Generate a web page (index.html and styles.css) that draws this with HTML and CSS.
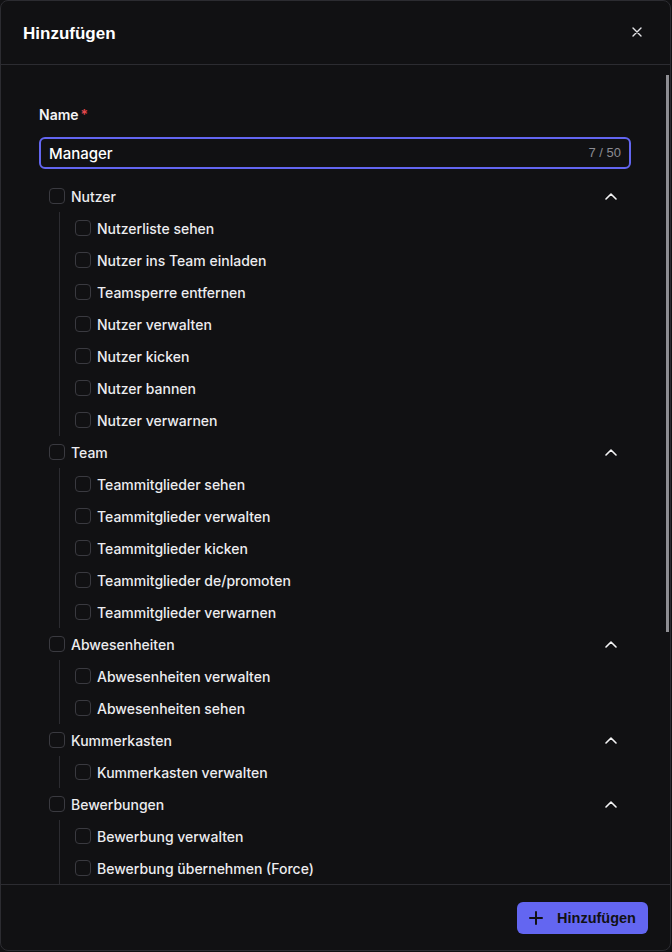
FILE: index.html
```html
<!DOCTYPE html>
<html lang="de">
<head>
  <meta charset="UTF-8" />
  <meta name="viewport" content="width=device-width, initial-scale=1.0"/>
  <title>Hinzufügen</title>
  <link rel="stylesheet" href="styles.css">
</head>
<body>
  <div class="modal">
    <header class="modal-header">
      <h2>Hinzufügen</h2>
      <button class="close" aria-label="Schließen">
        <svg width="10" height="10" viewBox="0 0 10 10"><path d="M1 1L9 9M9 1L1 9" stroke="#e4e4e7" stroke-width="1.4" stroke-linecap="round"/></svg>
      </button>
    </header>

    <div class="modal-body">
      <label class="field-label" for="name">Name<span class="req">*</span></label>
      <div class="input-wrap">
        <input type="text" id="name" value="Manager" maxlength="50">
        <span class="counter">7 / 50</span>
      </div>

      <div class="perm-list">
        <div class="group">
          <div class="group-row">
            <label class="check"><span class="box"></span>Nutzer</label>
            <svg class="chevron" width="12" height="7" viewBox="0 0 12 7"><path d="M1 6L6 1L11 6" fill="none" stroke="#f4f4f5" stroke-width="1.6" stroke-linecap="round" stroke-linejoin="round"/></svg>
          </div>
          <div class="children">
            <label class="check"><span class="box"></span>Nutzerliste sehen</label>
            <label class="check"><span class="box"></span>Nutzer ins Team einladen</label>
            <label class="check"><span class="box"></span>Teamsperre entfernen</label>
            <label class="check"><span class="box"></span>Nutzer verwalten</label>
            <label class="check"><span class="box"></span>Nutzer kicken</label>
            <label class="check"><span class="box"></span>Nutzer bannen</label>
            <label class="check"><span class="box"></span>Nutzer verwarnen</label>
          </div>
        </div>

        <div class="group">
          <div class="group-row">
            <label class="check"><span class="box"></span>Team</label>
            <svg class="chevron" width="12" height="7" viewBox="0 0 12 7"><path d="M1 6L6 1L11 6" fill="none" stroke="#f4f4f5" stroke-width="1.6" stroke-linecap="round" stroke-linejoin="round"/></svg>
          </div>
          <div class="children">
            <label class="check"><span class="box"></span>Teammitglieder sehen</label>
            <label class="check"><span class="box"></span>Teammitglieder verwalten</label>
            <label class="check"><span class="box"></span>Teammitglieder kicken</label>
            <label class="check"><span class="box"></span>Teammitglieder de/promoten</label>
            <label class="check"><span class="box"></span>Teammitglieder verwarnen</label>
          </div>
        </div>

        <div class="group">
          <div class="group-row">
            <label class="check"><span class="box"></span>Abwesenheiten</label>
            <svg class="chevron" width="12" height="7" viewBox="0 0 12 7"><path d="M1 6L6 1L11 6" fill="none" stroke="#f4f4f5" stroke-width="1.6" stroke-linecap="round" stroke-linejoin="round"/></svg>
          </div>
          <div class="children">
            <label class="check"><span class="box"></span>Abwesenheiten verwalten</label>
            <label class="check"><span class="box"></span>Abwesenheiten sehen</label>
          </div>
        </div>

        <div class="group">
          <div class="group-row">
            <label class="check"><span class="box"></span>Kummerkasten</label>
            <svg class="chevron" width="12" height="7" viewBox="0 0 12 7"><path d="M1 6L6 1L11 6" fill="none" stroke="#f4f4f5" stroke-width="1.6" stroke-linecap="round" stroke-linejoin="round"/></svg>
          </div>
          <div class="children">
            <label class="check"><span class="box"></span>Kummerkasten verwalten</label>
          </div>
        </div>

        <div class="group">
          <div class="group-row">
            <label class="check"><span class="box"></span>Bewerbungen</label>
            <svg class="chevron" width="12" height="7" viewBox="0 0 12 7"><path d="M1 6L6 1L11 6" fill="none" stroke="#f4f4f5" stroke-width="1.6" stroke-linecap="round" stroke-linejoin="round"/></svg>
          </div>
          <div class="children">
            <label class="check"><span class="box"></span>Bewerbung verwalten</label>
            <label class="check"><span class="box"></span>Bewerbung übernehmen (Force)</label>
          </div>
        </div>
      </div>

      <div class="scroll-thumb"></div>
    </div>

    <footer class="modal-footer">
      <button class="btn-primary">
        <svg width="14" height="14" viewBox="0 0 14 14"><path d="M7 1V13M1 7H13" stroke="#111113" stroke-width="2" stroke-linecap="round"/></svg>
        Hinzufügen
      </button>
    </footer>
  </div>
</body>
</html>
```

FILE: styles.css
```css
body {
  margin: 0;
  background-color: #111113;
  font-family: 'Inter', 'Noto Sans', sans-serif;
  color: #ededf0;
}

.modal {
  width: 671px;
  height: 951px;
  box-sizing: border-box;
  border: 1px solid #2c2c31;
  border-radius: 8px;
  background-color: #111113;
  display: flex;
  flex-direction: column;
  overflow: hidden;
}

.modal-header {
  height: 64px;
  flex-shrink: 0;
  box-sizing: border-box;
  padding: 2px 23px 0 22px;
  display: flex;
  align-items: center;
  justify-content: space-between;
  border-bottom: 1px solid #2c2c31;
}

.modal-header h2 {
  margin: 0;
  font-family: 'Liberation Sans', Arial, sans-serif;
  font-size: 17px;
  font-weight: bold;
  color: #ffffff;
}

.close {
  background: none;
  border: none;
  padding: 0;
  margin-right: 5px;
  margin-bottom: 4px;
  width: 10px;
  height: 10px;
  display: flex;
  cursor: pointer;
}

.modal-body {
  position: relative;
  flex: 1;
  overflow: hidden;
  padding: 40px 39px 0 38px;
}

/* Scrollbalken nachgebildet */
.scroll-thumb {
  position: absolute;
  top: 10px;
  right: 1px;
  width: 3px;
  height: 557px;
  background-color: #8e8e93;
}

.field-label {
  display: block;
  font-size: 14px;
  font-weight: 600;
  line-height: 20px;
  color: #f4f4f5;
  margin-bottom: 12px;
}

.req {
  color: #e5484d;
  margin-left: 2px;
}

.input-wrap {
  position: relative;
  height: 32px;
}

.input-wrap input {
  width: 100%;
  height: 32px;
  box-sizing: border-box;
  background: transparent;
  border: 2px solid #6366f1;
  border-radius: 6px;
  padding: 0 60px 0 8px;
  font-family: 'Inter', 'Noto Sans', sans-serif;
  font-size: 15px;
  font-weight: 500;
  color: #ffffff;
  outline: none;
}

.counter {
  position: absolute;
  right: 10px;
  top: 8px;
  font-family: 'Liberation Sans', Arial, sans-serif;
  font-size: 13px;
  color: #8b8b92;
}

.perm-list {
  margin-top: 11px;
  padding: 0 14px 0 10px;
}

.group-row {
  height: 32px;
  display: flex;
  align-items: center;
  justify-content: space-between;
}

.check {
  height: 32px;
  display: flex;
  align-items: center;
  gap: 6px;
  font-size: 14px;
  font-weight: 500;
  color: #ececef;
}

.box {
  width: 16px;
  height: 16px;
  box-sizing: border-box;
  border: 1px solid #3a3a40;
  border-radius: 4px;
  flex-shrink: 0;
}

.children {
  margin-left: 10px;
  border-left: 1px solid #2c2c31;
  padding-left: 15px;
  display: flex;
  flex-direction: column;
}

.modal-footer {
  height: 66px;
  flex-shrink: 0;
  box-sizing: border-box;
  border-top: 1px solid #2c2c31;
  display: flex;
  align-items: center;
  justify-content: flex-end;
  padding: 0 22px;
}

.btn-primary {
  height: 32px;
  width: 131px;
  display: flex;
  align-items: center;
  justify-content: center;
  gap: 14px;
  background-color: #6366f1;
  border: none;
  border-radius: 6px;
  font-family: 'Liberation Sans', Arial, sans-serif;
  font-size: 14.5px;
  font-weight: bold;
  color: #111113;
  cursor: pointer;
}
```
